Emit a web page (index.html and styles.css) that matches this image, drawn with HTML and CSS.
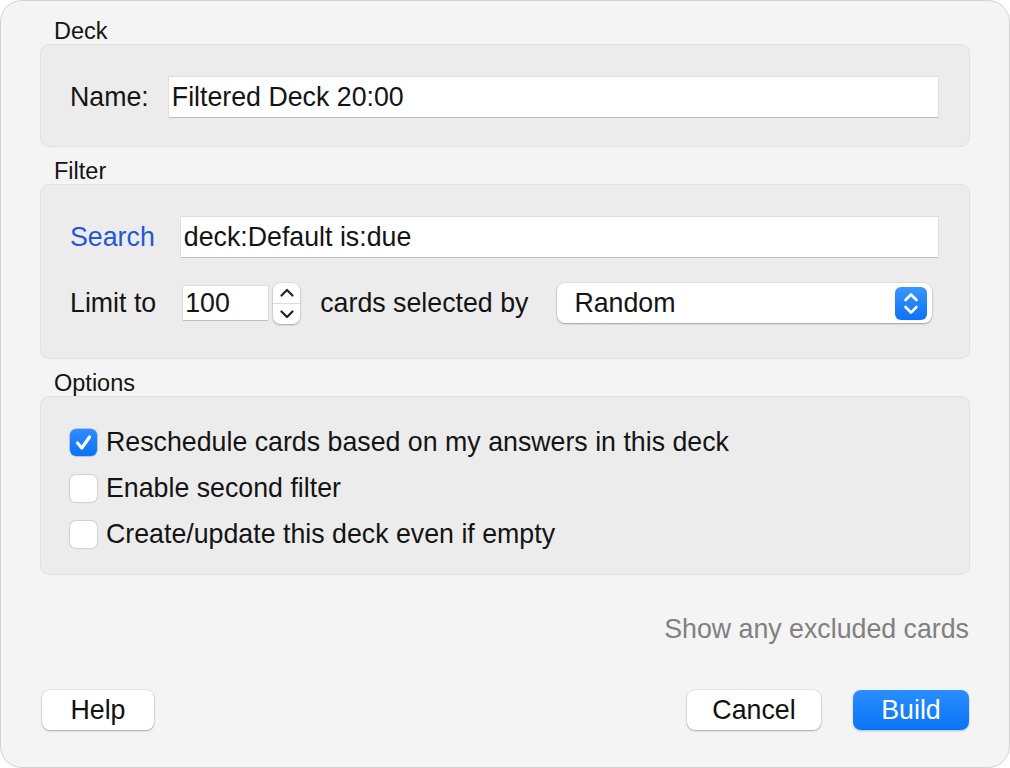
FILE: index.html
```html
<!DOCTYPE html>
<html>
<head>
<meta charset="utf-8">
<link rel="stylesheet" href="styles.css">
</head>
<body>
<div class="window">
  <div class="section-title">Deck</div>
  <div class="group group-deck">
    <div class="row">
      <span class="label">Name:</span>
      <div class="field name-field">Filtered Deck 20:00</div>
    </div>
  </div>

  <div class="section-title spaced">Filter</div>
  <div class="group group-filter">
    <div class="row row-search">
      <span class="label link">Search</span>
      <div class="field search-field">deck:Default is:due</div>
    </div>
    <div class="row row-limit">
      <span class="label">Limit to</span>
      <div class="field limit-field">100</div>
      <div class="stepper">
        <svg class="step-up" width="18" height="11" viewBox="0 0 18 11"><path d="M3.5 8.5 L9 3 L14.5 8.5" fill="none" stroke="#222" stroke-width="2.2" stroke-linecap="round" stroke-linejoin="round"/></svg>
        <div class="step-sep"></div>
        <svg class="step-down" width="18" height="11" viewBox="0 0 18 11"><path d="M3.5 2.5 L9 8 L14.5 2.5" fill="none" stroke="#222" stroke-width="2.2" stroke-linecap="round" stroke-linejoin="round"/></svg>
      </div>
      <span class="label selected-by">cards selected by</span>
      <div class="select">
        <span class="select-text">Random</span>
        <div class="select-arrows">
          <svg width="32" height="33" viewBox="0 0 32 33"><path d="M10.5 13 L16 7.5 L21.5 13" fill="none" stroke="#fff" stroke-width="2.6" stroke-linecap="round" stroke-linejoin="round"/><path d="M10.5 20 L16 25.5 L21.5 20" fill="none" stroke="#fff" stroke-width="2.6" stroke-linecap="round" stroke-linejoin="round"/></svg>
        </div>
      </div>
    </div>
  </div>

  <div class="section-title spaced">Options</div>
  <div class="group group-options">
    <div class="check-row">
      <span class="checkbox checked">
        <svg width="27" height="27" viewBox="0 0 27 27"><path d="M7.5 14 L11.8 19 L19.5 8" fill="none" stroke="#fff" stroke-width="3.2" stroke-linecap="round" stroke-linejoin="round"/></svg>
      </span>
      <span class="check-label">Reschedule cards based on my answers in this deck</span>
    </div>
    <div class="check-row">
      <span class="checkbox"></span>
      <span class="check-label">Enable second filter</span>
    </div>
    <div class="check-row">
      <span class="checkbox"></span>
      <span class="check-label">Create/update this deck even if empty</span>
    </div>
  </div>

  <div class="excluded">Show any excluded cards</div>

  <div class="buttons">
    <div class="btn btn-help">Help</div>
    <div class="btn-right">
      <div class="btn btn-cancel">Cancel</div>
      <div class="btn btn-build">Build</div>
    </div>
  </div>
</div>
</body>
</html>
```

FILE: styles.css
```css
html, body {
  margin: 0;
  padding: 0;
  background: #ffffff;
}

body {
  font-family: "Liberation Sans", Arial, sans-serif;
  color: #141414;
}

.window {
  width: 1010px;
  height: 768px;
  box-sizing: border-box;
  border: 1px solid #d2d2d2;
  border-radius: 22px;
  background: #f4f4f4;
  padding: 17px 39px 0 39px;
  overflow: hidden;
}

.section-title {
  font-size: 23.5px;
  line-height: 26px;
  padding-left: 14px;
}

.section-title.spaced {
  margin-top: 11px;
}

.group {
  background: #ececec;
  border: 1px solid #e1e1e1;
  border-radius: 9px;
}

.group-deck {
  padding: 32px 31px 29px 29px;
}

.group-filter {
  padding: 32px 37px 34px 29px;
}

.group-options {
  padding: 30px 29px 25px 29px;
  display: flex;
  flex-direction: column;
  gap: 16px;
}

.row {
  display: flex;
  align-items: center;
}

.label {
  font-size: 26.75px;
  line-height: 30px;
  white-space: nowrap;
}

.link {
  color: #2356d9;
}

.field {
  background: #ffffff;
  font-size: 26.75px;
  height: 40px;
  line-height: 40px;
  box-sizing: border-box;
  padding-left: 3px;
  box-shadow: 0 1px 0 #bdbdbd, 0 0 0 1px #dedede;
  white-space: nowrap;
}

.name-field {
  margin-left: 20px;
  flex: 1;
}

.row-search {
  height: 40px;
  margin-right: -6px;
}

.search-field {
  margin-left: 26px;
  flex: 1;
}

.row-limit {
  margin-top: 25px;
  height: 42px;
}

.limit-field {
  margin-left: 27px;
  width: 85px;
  height: 34px;
  line-height: 34px;
  padding-left: 2px;
}

.stepper {
  margin-left: 5px;
  width: 27px;
  height: 41px;
  border-radius: 7px;
  background: #ffffff;
  box-shadow: 0 1px 2px rgba(0,0,0,0.25), 0 0 0 0.5px rgba(0,0,0,0.12);
  display: flex;
  flex-direction: column;
  align-items: center;
  justify-content: space-between;
  padding: 4px 0 4px;
  box-sizing: border-box;
}

.step-sep {
  width: 100%;
  height: 1px;
  background: #dcdcdc;
}

.selected-by {
  margin-left: 20px;
}

.select {
  margin-left: 29px;
  flex: 1;
  height: 40px;
  border-radius: 8px;
  background: #ffffff;
  box-shadow: 0 1px 2px rgba(0,0,0,0.28), 0 0 0 0.5px rgba(0,0,0,0.12);
  display: flex;
  align-items: center;
  justify-content: space-between;
  padding: 0 5px 0 17px;
  box-sizing: border-box;
}

.select-text {
  font-size: 26.75px;
  line-height: 30px;
}

.select-arrows {
  width: 32px;
  height: 33px;
  border-radius: 6px;
  background: linear-gradient(#3b97ff, #0b72f6);
  display: flex;
}

.check-row {
  display: flex;
  align-items: center;
  height: 30px;
}

.checkbox {
  width: 27px;
  height: 27px;
  box-sizing: border-box;
  border-radius: 6px;
  background: #ffffff;
  box-shadow: 0 0 0 1px #d2d2d2, 0 1px 1px rgba(0,0,0,0.08);
  display: flex;
  flex-shrink: 0;
}

.checkbox.checked {
  background: linear-gradient(#2f8cff, #0a72f5);
  box-shadow: 0 0 0 0.5px rgba(0,80,200,0.5);
}

.check-label {
  margin-left: 9px;
  font-size: 26.75px;
  line-height: 30px;
  white-space: nowrap;
}

.excluded {
  margin-top: 39px;
  text-align: right;
  padding-right: 1px;
  font-size: 26.75px;
  line-height: 30px;
  color: #808080;
}

.buttons {
  margin-top: 46px;
  display: flex;
  justify-content: space-between;
  padding: 0 1px 0 2px;
}

.btn-right {
  display: flex;
  gap: 32px;
}

.btn {
  height: 40px;
  line-height: 40px;
  border-radius: 8px;
  font-size: 26.75px;
  text-align: center;
  background: #ffffff;
  box-shadow: 0 1px 2px rgba(0,0,0,0.28), 0 0 0 0.5px rgba(0,0,0,0.12);
  color: #111;
}

.btn-help {
  width: 112px;
}

.btn-cancel {
  width: 134px;
}

.btn-build {
  width: 116px;
  color: #ffffff;
  background: linear-gradient(#2a8eff, #0a74f6);
  box-shadow: 0 1px 2px rgba(0,60,160,0.3);
}
```
